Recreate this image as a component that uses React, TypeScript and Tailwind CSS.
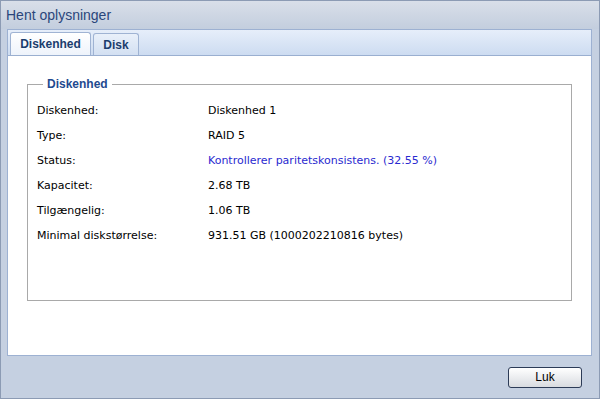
const rows: { label: string; value: string; link?: boolean }[] = [
  { label: "Diskenhed:", value: "Diskenhed 1" },
  { label: "Type:", value: "RAID 5" },
  { label: "Status:", value: "Kontrollerer paritetskonsistens. (32.55 %)", link: true },
  { label: "Kapacitet:", value: "2.68 TB" },
  { label: "Tilgængelig:", value: "1.06 TB" },
  { label: "Minimal diskstørrelse:", value: "931.51 GB (1000202210816 bytes)" },
]

export default function App() {
  return (
    <div
      className="w-[600px] h-[399px] flex flex-col bg-[#c5d0e1] border border-[#8c9bb4] overflow-hidden text-[11px] text-black"
      style={{ fontFamily: '"Liberation Sans", Tahoma, sans-serif' }}
    >
      {/* title bar */}
      <div className="h-[28px] shrink-0 flex items-center px-[5px] bg-gradient-to-b from-[#d9dfe9] to-[#c3cede]">
        <span className="text-[14px] text-[#2a467b]">Hent oplysninger</span>
      </div>

      {/* main panel */}
      <div className="flex-1 ml-[6px] mr-[7px] flex flex-col border border-[#9db1d2] bg-white">
        <div className="h-[26px] shrink-0 flex items-end gap-[2px] pl-[2px] bg-gradient-to-b from-[#e6eefa] to-[#cddcf1] border-b border-[#9aafd0]">
          <div className="h-[23px] w-[81px] flex items-center justify-center rounded-t-[3px] border border-b-0 border-[#9fb3d3] bg-gradient-to-b from-white to-[#eef3fb] text-[12px] font-bold text-[#1b3d6d]">
            Diskenhed
          </div>
          <div className="h-[22px] w-[46px] flex items-center justify-center rounded-t-[3px] border border-b-0 border-[#9fb3d3] bg-gradient-to-b from-[#e9f0fa] to-[#d3e0f2] text-[12px] font-bold text-[#1b3d6d]">
            Disk
          </div>
        </div>

        <div className="flex-1 px-[19px] pt-[21px]">
          <fieldset className="h-[224px] border border-[#a9a9a9] px-[9px]">
            <legend className="ml-[6px] px-[4px] text-[12px] font-bold text-[#1f4a8f] leading-[14px]">Diskenhed</legend>
            <div className="mt-[8px] flex flex-col font-['DejaVu_Sans',sans-serif] text-[11px]">
              {rows.map((r) => (
                <div key={r.label} className="h-[25px] flex items-center">
                  <span className="w-[171px] shrink-0">{r.label}</span>
                  <span className={r.link ? "text-[#2a2ad0]" : ""}>{r.value}</span>
                </div>
              ))}
            </div>
          </fieldset>
        </div>
      </div>

      {/* footer */}
      <div className="h-[42px] shrink-0 flex items-center justify-end pr-[17px]">
        <button className="w-[74px] h-[21px] rounded-[3px] border border-[#2c3b57] bg-gradient-to-b from-white to-[#d8dbe0] text-[12px] text-black">
          Luk
        </button>
      </div>
    </div>
  )
}
